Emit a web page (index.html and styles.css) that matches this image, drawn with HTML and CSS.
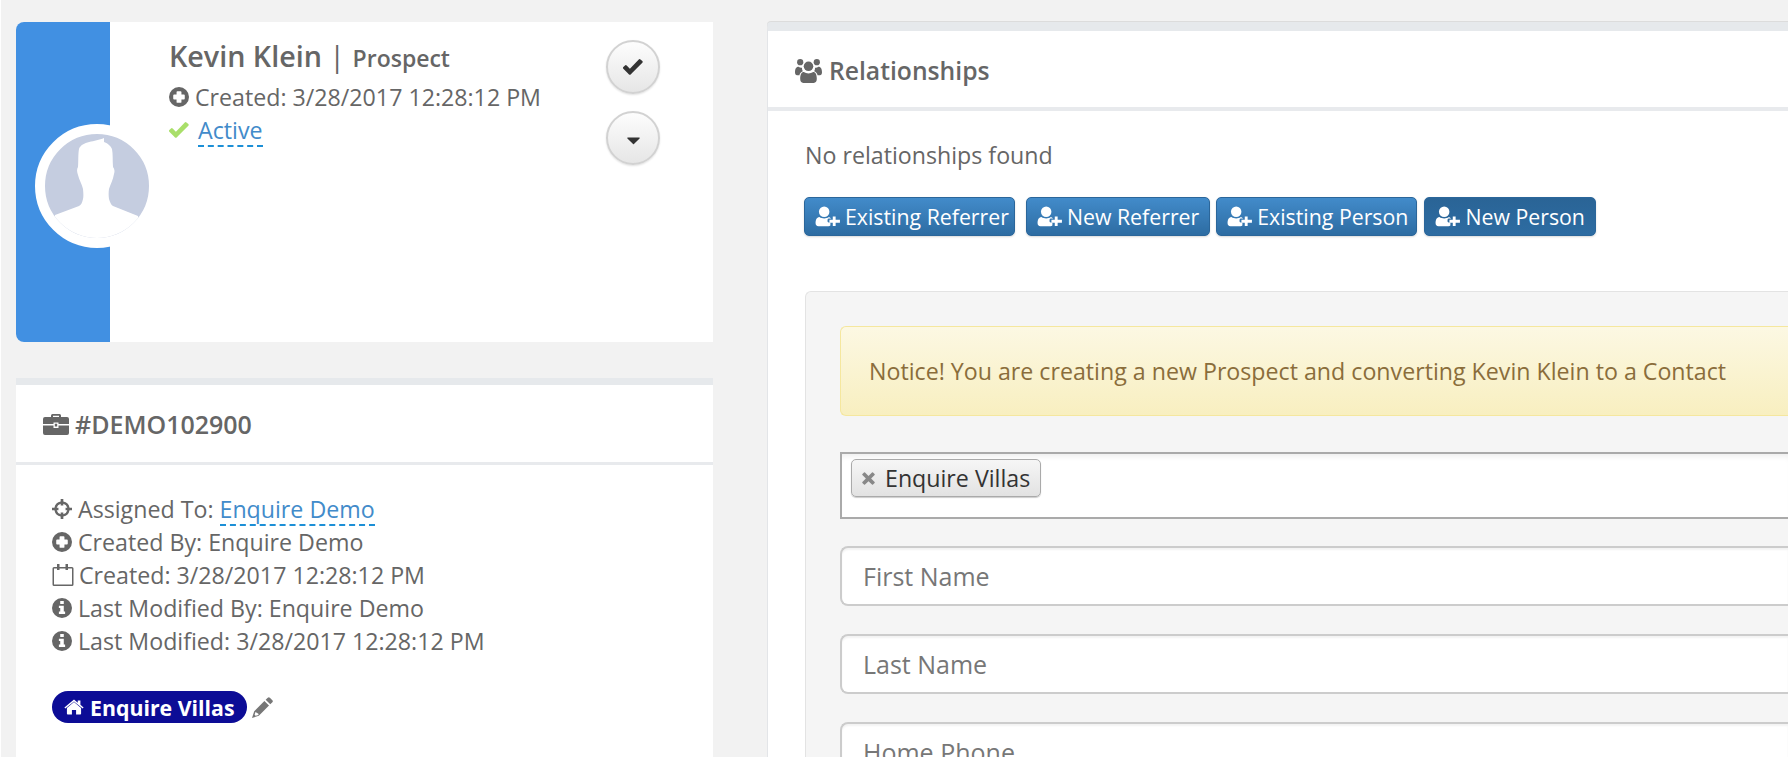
FILE: index.html
```html
<!DOCTYPE html>
<html lang="en">
<head>
<meta charset="utf-8">
<title>Kevin Klein | Prospect</title>
<link rel="stylesheet" href="styles.css">
</head>
<body>
<svg class="defs" aria-hidden="true">
  <symbol id="i-plus" viewBox="1 1 18 18"><path fill-rule="evenodd" d="M10 1a9 9 0 1 1 0 18a9 9 0 0 1 0-18zM8.600 4.800a.8.8 0 0 0-.8.8v2.200H5.600a.8.8 0 0 0-.8.8v2.800a.8.8 0 0 0 .8.8h2.200v2.200a.8.8 0 0 0 .8.8h2.800a.8.8 0 0 0 .8-.8v-2.200h2.200a.8.8 0 0 0 .8-.8V8.600a.8.8 0 0 0-.8-.8h-2.200V5.600a.8.8 0 0 0-.8-.8z"/></symbol>
  <symbol id="i-check" viewBox="0.6 2.900 18 14.300"><path d="M18.300 5.400a1 1 0 0 1-.3.800L9 15.200l-1.500 1.500a1 1 0 0 1-1.500 0l-1.500-1.500L.9 11.600a1 1 0 0 1 0-1.500l1.500-1.500a1 1 0 0 1 1.500 0l2.900 3L14.800 3.300a1 1 0 0 1 1.500 0L18 4.700a1 1 0 0 1 .3.700z"/></symbol>
  <symbol id="i-caret" viewBox="0 0 20 20"><path d="M2.500 6h15a.8.8 0 0 1 .6 1.400l-7.500 7.400a.9.9 0 0 1-1.200 0L1.900 7.400A.8.8 0 0 1 2.500 6z"/></symbol>
  <symbol id="i-cross" viewBox="1 1 18 18"><path fill-rule="evenodd" d="M8.800 1h2.400v2.200a7 7 0 0 1 5.600 5.600H19v2.400h-2.200a7 7 0 0 1-5.600 5.600V19H8.800v-2.200a7 7 0 0 1-5.600-5.600H1V8.800h2.200a7 7 0 0 1 5.600-5.600zM8.800 5.200a5 5 0 0 0-3.600 3.600h1.600v2.400H5.200a5 5 0 0 0 3.600 3.600v-1.600h2.400v1.600a5 5 0 0 0 3.600-3.600h-1.600V8.800h1.600a5 5 0 0 0-3.600-3.600v1.600H8.800z"/></symbol>
  <symbol id="i-cal" viewBox="0 0 22 24"><path fill-rule="evenodd" d="M5 1h2.500v3h6V1H16v3h4a1.500 1.500 0 0 1 1.500 1.500v16A1.500 1.500 0 0 1 20 23H2A1.500 1.500 0 0 1 .5 21.500v-16A1.500 1.500 0 0 1 2 4h3zM2 5.500v16h18v-16h-4V7h-2.500V5.500h-6V7H5V5.500z"/></symbol>
  <symbol id="i-info" viewBox="1 1 18 18"><path fill-rule="evenodd" d="M10 1a9 9 0 1 1 0 18a9 9 0 0 1 0-18zM8.400 3.600v2.800h3.200V3.600zM7.200 8v2h1.200v3.200H7.200v2.200h5.600v-2.200h-1.200V8z"/></symbol>
  <symbol id="i-case" viewBox="0 0 26 22"><path fill-rule="evenodd" d="M8 4V2.500A1.500 1.500 0 0 1 9.500 1h7A1.500 1.500 0 0 1 18 2.500V4h6a2 2 0 0 1 2 2v5H15.500V9.500h-5V11H0V6a2 2 0 0 1 2-2zM10 4h6V2.800h-6zM0 12.500h10.500V15h5v-2.500H26V20a2 2 0 0 1-2 2H2a2 2 0 0 1-2-2zM11.800 10.800h2.400v2.800h-2.400z"/></symbol>
  <symbol id="i-users" viewBox="0 0 26 24"><circle cx="5" cy="4" r="3"/><circle cx="21" cy="4" r="3"/><circle cx="13" cy="8" r="4.600"/><path d="M0 14c0-4 1.500-5.500 3.500-5.500c1 .8 2.200 1 3.200.8a6.500 6.500 0 0 0 .8 3.400C5.500 13.500 4.500 15 4.300 16.500H2C.8 16.500 0 15.500 0 14zM26 14c0-4-1.500-5.500-3.500-5.500c-1 .8-2.200 1-3.200.8a6.500 6.500 0 0 1-.8 3.400c2 .8 3 2.300 3.200 3.800H24c1.200 0 2-1 2-2.500zM8.500 13.500c2.500 1.800 6.500 1.800 9 0c2.300 0 3.500 2.500 3.500 6.500c0 2.500-1 4-3 4H8c-2 0-3-1.500-3-4c0-4 1.200-6.500 3.500-6.500z"/></symbol>
  <symbol id="i-uplus" viewBox="0 0 26 22"><circle cx="9" cy="6" r="5.500"/><path d="M4 11.500c3 2 7 2 10 0c1 .3 1.800.9 2.400 1.700H14a1.500 1.500 0 0 0-1.500 1.500v1.500A1.500 1.500 0 0 0 14 17.200h1.500v3.300c-.5.500-1.200.7-2 .7H3c-2 0-3-1.200-3-3c0-3.500 1-6.200 4-6.700z"/><path d="M18 11h3v3.500h4.500v3H21V21h-3v-3.500h-3.500v-3H18z"/></symbol>
  <symbol id="i-home" viewBox="0 0 24 20"><path d="M12 3.500l8.500 7v7a1 1 0 0 1-1 1H14.500v-5.500h-5V18.500H4.500a1 1 0 0 1-1-1v-7z"/><path d="M12 .5l4.500 3.700V1.500h3.200v5.300L23.500 10l-1.100 1.300L12 2.900L1.600 11.300L.5 10z"/></symbol>
  <symbol id="i-pencil" viewBox="0 0 20 20"><path fill-rule="evenodd" d="M15 .6a1.500 1.500 0 0 1 2 0L19.400 3a1.500 1.500 0 0 1 0 2L17.400 7L13 2.600zM11.800 3.800L16.200 8.200L6.500 17.900L0 20l2.100-6.500zM3.300 14.300L2.500 17l.6.500l.4.400l2.700-.8l-.1-1.200L4.500 15z"/></symbol>
  <symbol id="i-times" viewBox="0 0 16 16"><path d="M4.300 1.500L8 5.200l3.700-3.700a.8.8 0 0 1 1.100 0l1.700 1.700a.8.8 0 0 1 0 1.100L10.800 8l3.700 3.700a.8.8 0 0 1 0 1.100l-1.700 1.700a.8.8 0 0 1-1.100 0L8 10.800l-3.700 3.700a.8.8 0 0 1-1.100 0l-1.700-1.700a.8.8 0 0 1 0-1.100L5.200 8L1.500 4.300a.8.800 0 0 1 0-1.100l1.700-1.700a.8.8 0 0 1 1.100 0z"/></symbol>
</svg>

<div class="page">
  <aside class="left">
    <section class="profile">
      <div class="profile-side"></div>
      <div class="avatar">
        <svg viewBox="0 0 104 104" class="avatar-img" aria-hidden="true">
          <path d="M59 4C50 8 37 7 34 15C33 20 33.500 28 33 33C31.500 35 32 38 33 41C34 46 37 50 38 55C38.500 60 38.500 63 38 65C37 69 36 71 34 72L10 81L8 104H96L93 82L68 72C66 71 65 68 64 65C63.500 62 63.500 58 64 55C65.500 50 68 46 69 40C70 37 69.500 35 68 33C67.500 26 68 20 67 15C66 12 62 9 59 8Z"/>
        </svg>
      </div>
      <div class="profile-info">
        <h1 class="name">Kevin Klein <span class="sep">|</span> <small class="role">Prospect</small></h1>
        <div class="meta"><svg class="ico ico-plus"><use href="#i-plus"/></svg>Created: 3/28/2017 12:28:12 PM</div>
        <div class="meta"><svg class="ico ico-ok"><use href="#i-check"/></svg><a class="dash" href="#">Active</a></div>
      </div>
      <div class="actions">
        <button class="round"><svg class="ico-round"><use href="#i-check"/></svg></button>
        <button class="round"><svg class="ico-caret"><use href="#i-caret"/></svg></button>
      </div>
    </section>

    <section class="card card-detail">
      <header class="card-head head-detail"><svg class="ico-case"><use href="#i-case"/></svg>#DEMO102900</header>
      <div class="detail-body">
        <div class="row"><svg class="ico"><use href="#i-cross"/></svg>Assigned To: <a class="dash" href="#">Enquire Demo</a></div>
        <div class="row"><svg class="ico"><use href="#i-plus"/></svg>Created By: Enquire Demo</div>
        <div class="row"><svg class="ico ico-cal"><use href="#i-cal"/></svg>Created: 3/28/2017 12:28:12 PM</div>
        <div class="row"><svg class="ico"><use href="#i-info"/></svg>Last Modified By: Enquire Demo</div>
        <div class="row"><svg class="ico"><use href="#i-info"/></svg>Last Modified: 3/28/2017 12:28:12 PM</div>
        <div class="tags">
          <span class="badge"><svg class="ico-home"><use href="#i-home"/></svg>Enquire Villas</span>
          <svg class="ico-pencil"><use href="#i-pencil"/></svg>
        </div>
      </div>
    </section>
  </aside>

  <main class="card right">
    <header class="card-head head-rel"><svg class="ico-users"><use href="#i-users"/></svg>Relationships</header>
    <div class="rel-body">
      <p class="none">No relationships found</p>
      <div class="btns">
        <button class="btn"><svg class="ico-uplus"><use href="#i-uplus"/></svg>Existing Referrer</button>
        <button class="btn"><svg class="ico-uplus"><use href="#i-uplus"/></svg>New Referrer</button>
        <button class="btn"><svg class="ico-uplus"><use href="#i-uplus"/></svg>Existing Person</button>
        <button class="btn btn-active"><svg class="ico-uplus"><use href="#i-uplus"/></svg>New Person</button>
      </div>
      <div class="well">
        <div class="alert">Notice! You are creating a new Prospect and converting Kevin Klein to a Contact</div>
        <div class="select">
          <span class="chip"><svg class="ico-times"><use href="#i-times"/></svg>Enquire Villas</span>
        </div>
        <input class="field" type="text" placeholder="First Name">
        <input class="field" type="text" placeholder="Last Name">
        <input class="field" type="text" placeholder="Home Phone">
      </div>
    </div>
  </main>
</div>
</body>
</html>
```
FILE: styles.css
```css
* { box-sizing: border-box; }
html, body { margin: 0; height: 757px; overflow: hidden; }
body {
  background: #f2f2f2;
  border-left: 1px solid #fff;
  font-family: "Open Sans", "Liberation Sans", sans-serif;
  font-size: 23.2px;
  color: #666;
}
.defs { display: none; }
svg { fill: currentColor; flex: none; }
a { color: #428bca; text-decoration: none; }

.page { display: flex; gap: 54px; padding: 22px 0 0 15px; height: 757px; overflow: hidden; }
.left { width: 697px; flex: none; display: flex; flex-direction: column; gap: 36px; }

/* profile */
.profile { position: relative; display: flex; flex: none; height: 320px; background: #fff; border-radius: 8px 0 0 8px; }
.profile-side { width: 94px; flex: none; background: #4190e2; border-radius: 8px 0 0 8px; }
.avatar {
  position: absolute; left: 19px; top: 102px;
  width: 124px; height: 124px; border-radius: 50%;
  background: #c5cde0; border: 10px solid #fff; overflow: hidden;
}
.avatar-img { display: block; width: 104px; height: 104px; fill: #fff; }
.profile-info { flex: 1; padding: 17px 0 0 59px; }
.name { margin: 0 0 5px; font-size: 28.7px; line-height: 34px; font-weight: 600; color: #666; }
.sep { font-weight: 400; }
.role { font-size: 23px; font-weight: 600; }
.meta { display: flex; align-items: center; height: 33px; white-space: pre; }
.ico { width: 20px; height: 20px; margin-right: 6px; color: #666; }
.ico-plus { margin-right: 6px; }
.ico-ok { color: #a9df6a; margin-right: 9px; }
.dash { display: inline-block; line-height: 30px; border-bottom: 2px dashed #1c8fd6; margin-bottom: -2px; }
.actions { display: flex; flex-direction: column; gap: 17px; padding: 18px 53px 0 0; }
.round {
  width: 54px; height: 54px; padding: 0; border-radius: 50%;
  display: flex; align-items: center; justify-content: center;
  border: 2px solid #d2d2d2; background: linear-gradient(#fdfdfd, #e6e6e6);
  box-shadow: 0 1px 2px rgba(0,0,0,.12); color: #333;
}
.ico-round { width: 20px; height: 20px; }
.ico-caret { width: 15px; height: 15px; margin-top: 4px; }

/* cards */
.card { background: #fff; border-top: 7px solid #e6e9ec; }
.card-detail { flex: 1; }
.card-head {
  display: flex; align-items: center; height: 80px;
  padding-left: 27px; font-size: 24.7px; font-weight: 600;
  border-bottom: 3px solid #e8eaed;
}
.head-detail { padding-top: 1px; font-size: 25px; }
.ico-case { width: 26px; height: 22px; margin-right: 6px; }
.detail-body { padding: 27px 0 0 36px; }
.row { display: flex; align-items: center; height: 33px; white-space: pre; }
.ico-cal { width: 22px; height: 24px; margin-right: 5px; }
.tags { display: flex; align-items: center; gap: 5px; margin-top: 34px; }
.badge {
  display: flex; align-items: center; height: 32px; width: 195px;
  padding-left: 12px; border-radius: 16px; background: #0c0c96;
  color: #fff; font-size: 21.3px; font-weight: 700;
}
.ico-home { width: 20px; height: 17px; margin-right: 6px; }
.ico-pencil { width: 21px; height: 21px; color: #777; }

/* right */
.right {
  flex: 1; min-width: 0; display: flex; flex-direction: column;
  border-top-width: 9px; border-left: 1px solid #e3e5e8; border-radius: 4px 0 0 0;
  box-shadow: 0 -1px 0 #dcdcdc;
}
.head-rel { flex: none; height: 80px; padding: 2px 0 0 27px; border-bottom-width: 4px; }
.ico-users { width: 27px; height: 25px; margin-right: 7px; }
.rel-body { flex: 1; min-height: 0; display: flex; flex-direction: column; padding: 29px 0 0 37px; }
.none { margin: 0; line-height: 30px; flex: none; }
.btns { display: flex; flex: none; margin: 27px 0 0 -1px; }
.btn {
  display: flex; align-items: center; height: 39px; padding: 0 10px;
  font: 400 21.3px "Open Sans", sans-serif; color: #fff;
  border: 1px solid #2b669a; border-radius: 5px;
  background: linear-gradient(#428bca, #2d6ca2);
  box-shadow: 0 1px 2px rgba(0,0,0,.15);
}
.btn:nth-child(1) { padding-right: 5px; margin-right: 11px; }
.btn:nth-child(2) { padding-right: 10px; margin-right: 6px; }
.btn:nth-child(3) { padding-right: 8px; margin-right: 7px; }
.btn-active { background: linear-gradient(#2a6496, #2d6ca2); }
.ico-uplus { width: 26px; height: 21px; margin-right: 4px; }

.well {
  flex: 1; min-height: 0; overflow: hidden;
  margin-top: 55px; padding: 34px 0 0 34px;
  background: #f5f5f5; border: 1px solid #e3e3e3; border-right: 0; border-bottom: 0;
  border-radius: 6px 0 0 0;
  display: flex; flex-direction: column;
}
.alert {
  display: flex; align-items: center; flex: none; height: 90px; padding-left: 28px;
  color: #8a6d3b; border: 1px solid #f5e79e; border-right: 0;
  border-radius: 6px 0 0 6px;
  background: linear-gradient(#fcf8e3, #f8efc0);
}
.select {
  flex: none; margin: 36px 0 -1px; height: 67px; padding: 5px 0 0 9px;
  background: #fff; border: 2px solid #aaa; border-right: 0;
  box-shadow: inset 0 6px 6px -4px rgba(0,0,0,.08);
  color: #333;
}
.chip {
  display: inline-flex; align-items: center; height: 38px; padding: 0 10px 0 9px;
  border: 1px solid #aaa; border-radius: 5px;
  background: linear-gradient(#f6f6f6, #e2e2e2);
  box-shadow: 0 1px 1px rgba(0,0,0,.2);
}
.ico-times { width: 15px; height: 15px; margin-right: 9px; color: #888; }
.field {
  height: 60px; margin: 28px 0 0; padding: 0 0 0 21px; flex: none;
  width: 100%;
  font: 400 25px "Open Sans", sans-serif; color: #555;
  background: #fff; border: 2px solid #ccc; border-right: 0; border-radius: 8px 0 0 8px;
  box-shadow: inset 0 2px 2px rgba(0,0,0,.05);
}
.field::placeholder { color: #777; opacity: 1; }
```
